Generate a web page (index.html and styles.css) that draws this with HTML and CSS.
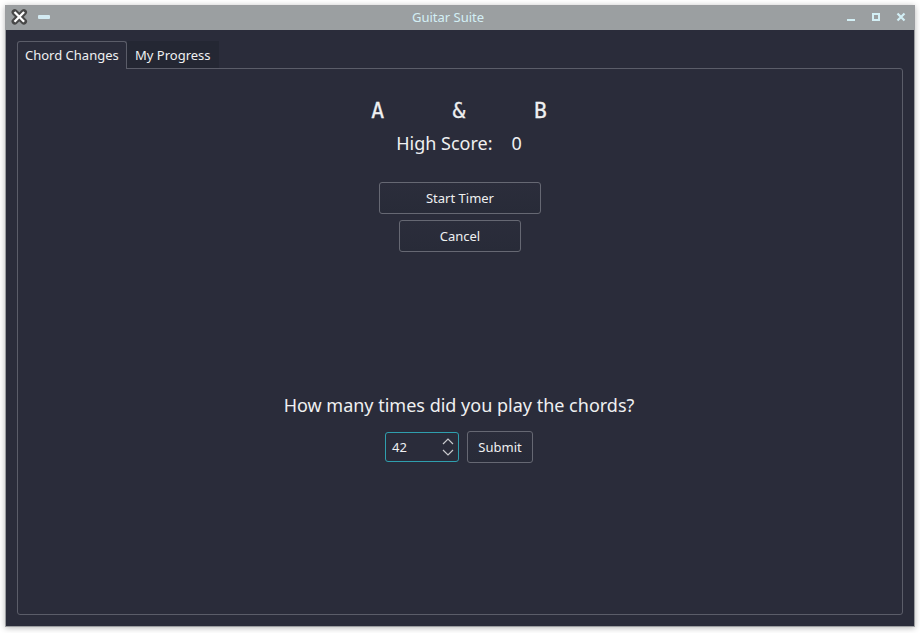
FILE: index.html
```html
<!DOCTYPE html>
<html lang="en">
<head>
<meta charset="utf-8">
<title>Guitar Suite</title>
<link rel="stylesheet" href="styles.css">
</head>
<body>
<div class="window">
  <header class="titlebar">
    <div class="title-left">
      <svg width="50" height="24" viewBox="0 0 50 24">
        <path d="M8.700 6.200l9.200 9.300m0-9.300l-9.200 9.300" stroke="#484848" stroke-width="6.200" stroke-linecap="round"/>
        <path d="M8.500 6l9.600 9.700m0-9.700l-9.600 9.700" stroke="#fff" stroke-width="2.300"/>
        <rect x="32" y="9" width="12" height="4" rx="1" fill="#d3eaf2"/>
      </svg>
    </div>
    <h1 class="title">Guitar Suite</h1>
    <div class="title-right">
      <svg width="70" height="24" viewBox="0 0 70 24">
        <rect x="3" y="13" width="8" height="2" fill="#d3eff5"/>
        <rect x="29" y="8" width="6" height="6" fill="none" stroke="#d3eff5" stroke-width="2"/>
        <path d="M53.500 7.500l7 7m0-7l-7 7" stroke="#d3eff5" stroke-width="2.200"/>
      </svg>
    </div>
  </header>
  <main class="content">
    <nav class="tabs">
      <div class="tab active">Chord Changes</div>
      <div class="tab">My Progress</div>
    </nav>
    <section class="panel">
      <div class="chords"><span>A</span><span>&amp;</span><span>B</span></div>
      <div class="score"><span>High Score:</span><span>0</span></div>
      <button class="button start">Start Timer</button>
      <button class="button cancel">Cancel</button>
      <p class="question">How many times did you play the chords?</p>
      <div class="entry">
        <div class="spinner">
          <span>42</span>
          <svg width="12" height="20" viewBox="0 0 12 20" fill="none" stroke="#c9cacd" stroke-width="1.200"><path d="M1 7l5-5 5 5M1 13l5 5 5-5"/></svg>
        </div>
        <button class="button submit">Submit</button>
      </div>
    </section>
  </main>
</div>
</body>
</html>
```
FILE: styles.css
```css
* { box-sizing: border-box; }
body {
  margin: 0;
  width: 920px;
  height: 633px;
  padding: 5px 5px 6px;
  overflow: hidden;
  background: #fff;
  color: #eff0f1;
  font: 13px/18px "Noto Sans", sans-serif;
}
.window {
  height: 622px;
  display: flex;
  flex-direction: column;
  border: 1px solid #9b9da0;
  background: #2a2c3a;
  box-shadow: 0 1px 6px rgba(0, 0, 0, .28);
}
.titlebar {
  height: 24px;
  flex: none;
  display: grid;
  grid-template-columns: 1fr auto 1fr;
  background: #9b9fa1;
}
.titlebar svg { display: block; }
.title {
  margin: 0;
  padding-right: 24px;
  font-size: 13px;
  font-weight: 400;
  line-height: 23px;
  color: #d3eff5;
}
.title-right { justify-self: end; }
.content {
  flex: 1;
  display: flex;
  flex-direction: column;
  padding: 11px;
}
.tabs {
  display: flex;
  height: 28px;
  flex: none;
  margin-bottom: -1px;
}
.tab {
  height: 27px;
  padding: 5px 8px 0;
  background: #242733;
  white-space: nowrap;
}
.tab.active {
  position: relative;
  width: 110px;
  height: 28px;
  padding: 4px 7px 0;
  border: 1px solid #5b5d69;
  border-bottom: 0;
  border-radius: 3px 3px 0 0;
  background: #2a2c3a;
}
.panel {
  flex: 1;
  display: flex;
  flex-direction: column;
  align-items: center;
  border: 1px solid #5b5d69;
  border-radius: 0 3px 3px 3px;
  padding-top: 28px;
}
.chords {
  display: flex;
  gap: 68.500px;
  margin-right: 2px;
  font: 21.330px/28px "DejaVu Sans Mono", monospace;
  -webkit-text-stroke: .3px #eff0f1;
}
.score {
  display: flex;
  gap: 19px;
  margin: 5px 2px 0 0;
  font-size: 18px;
  line-height: 26px;
}
.button {
  height: 32px;
  padding: 0;
  border: 1px solid #666873;
  border-radius: 3px;
  background: linear-gradient(#2b2d3b, #282b38);
  color: #eff0f1;
  font: inherit;
}
.start { width: 162px; margin-top: 26px; }
.cancel { width: 122px; margin-top: 6px; }
.question {
  margin: 140px 2px 0 0;
  font-size: 18px;
  line-height: 26px;
}
.entry {
  display: flex;
  align-items: center;
  gap: 8px;
  margin: 13px 2px 0 0;
}
.spinner {
  display: flex;
  justify-content: space-between;
  align-items: center;
  width: 74px;
  height: 30px;
  padding: 0 4px 0 6px;
  border: 1px solid #2f9fae;
  border-radius: 3px;
}
.submit { width: 66px; }
```
